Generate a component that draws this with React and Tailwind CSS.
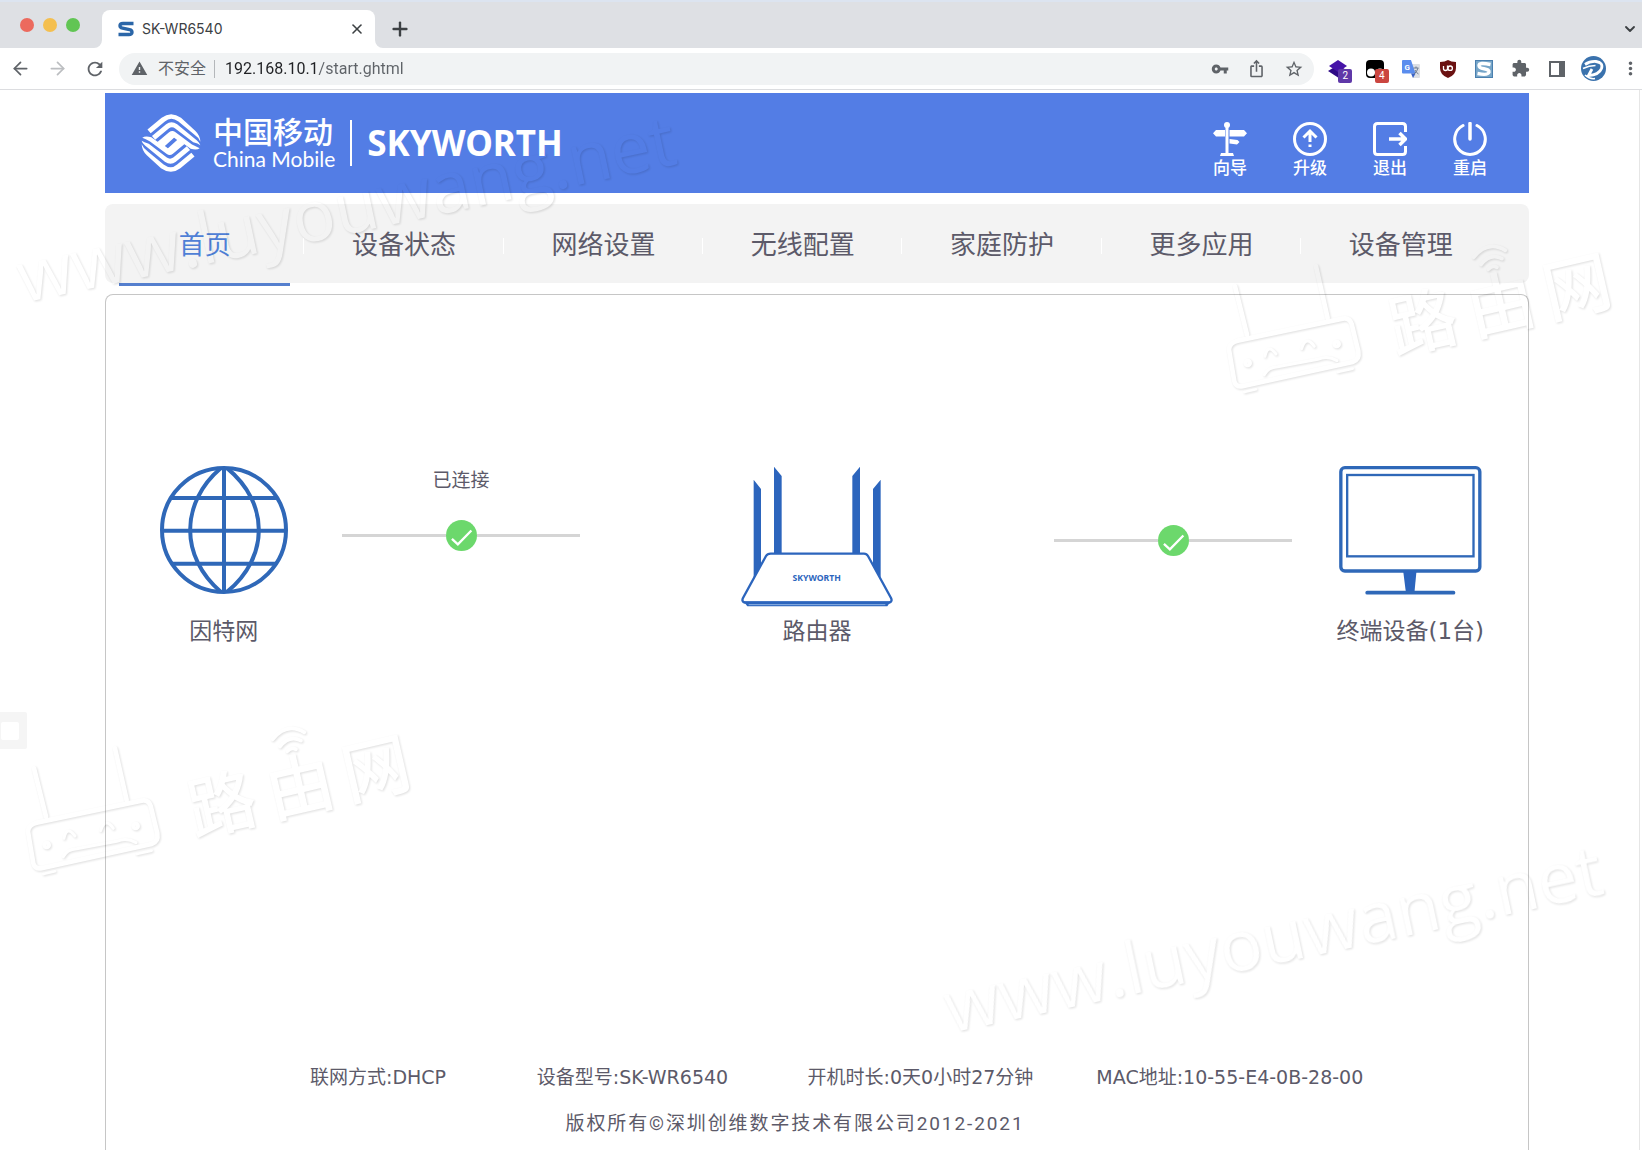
import React, { useState } from "react";
import { ArrowLeft, ArrowRight, ChevronDown, Plus, X } from "lucide-react";
import {
  MdExtension,
  MdMoreVert,
  MdOutlineIosShare,
  MdRefresh,
  MdStarOutline,
  MdVpnKey,
  MdWarning,
} from "react-icons/md";

const navItems = ["首页", "设备状态", "网络设置", "无线配置", "家庭防护", "更多应用", "设备管理"];

const deviceInfo = [
  "联网方式:DHCP",
  "设备型号:SK-WR6540",
  "开机时长:0天0小时27分钟",
  "MAC地址:10-55-E4-0B-28-00",
];

function TabStrip() {
  return (
    <div className="flex h-12 items-end border-t-2 border-[#dce4f0] bg-[#dee0e4] text-[#3c4043]">
      <div className="flex w-[102px] gap-[9px] self-start pt-4 pl-5">
        <span className="size-3.5 rounded-full bg-[#ec6a5e]"></span>
        <span className="size-3.5 rounded-full bg-[#f4bf4f]"></span>
        <span className="size-3.5 rounded-full bg-[#61c554]"></span>
      </div>
      <div className="relative flex h-[38px] w-[273px] items-center rounded-t-lg bg-white pr-2.5 pl-4">
        <svg className="absolute bottom-0 -left-2 size-2 fill-white" viewBox="0 0 8 8">
          <path d="M8 0v8H0a8 8 0 0 0 8-8z" />
        </svg>
        <svg className="absolute -right-2 bottom-0 size-2 fill-white" viewBox="0 0 8 8">
          <path d="M0 0v8h8a8 8 0 0 1-8-8z" />
        </svg>
        <svg className="size-4 fill-none stroke-[#2b66a8]" viewBox="0 0 16 16" strokeWidth="3.4">
          <path d="M15.500 2.500H5Q2 2.500 2 4.700 2 6.500 4.500 7.100L11.500 8.700Q14 9.300 14 11.200 14 13.500 11 13.500H.5" />
        </svg>
        <span className="ml-2 font-['Inter',sans-serif] text-sm">SK-WR6540</span>
        <button className="ml-auto" aria-label="close tab">
          <X className="size-4" strokeWidth={2.4} />
        </button>
      </div>
      <button className="ml-3.5 flex h-[38px] items-center" aria-label="new tab">
        <Plus className="size-[22px]" strokeWidth={2.6} />
      </button>
      <button className="mr-1 ml-auto flex h-[38px] items-center" aria-label="tab list">
        <ChevronDown className="size-4" strokeWidth={2.8} />
      </button>
    </div>
  );
}

function Extensions() {
  return (
    <div className="flex w-[292px] items-center justify-around">
      <button className="relative flex w-6 justify-center" aria-label="layers">
        <svg className="size-5" viewBox="0 0 20 20">
          <path d="M10 6l10 6-10 6.500L0 12z" fill="#2f0a86" />
          <path d="M10 1l9 6-9 6-9-6z" fill="#4614a8" />
        </svg>
        <span className="absolute top-2.5 left-3 w-3.5 rounded-xs bg-[#5f38a8] text-center text-[10px] leading-[14px] text-white">
          2
        </span>
      </button>
      <button className="relative flex w-6 justify-center" aria-label="scripts">
        <svg className="size-5" viewBox="0 0 20 20">
          <rect x="1" y="1" width="18" height="18" rx="4" fill="#000" />
          <circle cx="6" cy="13.500" r="4" fill="#fff" />
          <circle cx="15" cy="13.500" r="4" fill="#fff" />
        </svg>
        <span className="absolute top-2.5 left-3 w-3.5 rounded-xs bg-[#cb4640] text-center text-[10px] leading-[14px] text-white">
          4
        </span>
      </button>
      <button className="relative flex w-6 justify-center" aria-label="translate">
        <svg className="size-[18px]" viewBox="0 0 18 18">
          <path d="M7 4h10q1 0 1 1v12q0 1-1 1H11z" fill="#dcdfe4" />
          <path d="M1 0h8l4.500 13.500H1q-1 0-1-1V1q0-1 1-1z" fill="#5a8dee" />
          <path d="M9 13.500h4.500L11 18z" fill="#3a62c4" />
          <path d="M11.500 8h5M14 6.500V8M16 8q-1 4-4 6M13 10q1 2.500 3.500 4" fill="none" stroke="#6b7a90" />
          <text x="2.500" y="10" fontSize="8" fontWeight="700" fill="#fff">G</text>
        </svg>
      </button>
      <button className="relative flex w-6 justify-center" aria-label="blocker">
        <svg className="size-[18px]" viewBox="0 0 18 18">
          <path d="M9 0q3 2 8 2v6q0 7-8 10Q1 15 1 8V2q5 0 8-2z" fill="#6b1212" />
          <path d="M4.500 6v2.700q0 1.800 2 1.800t2-1.800V5.500M8.700 5.500v5" fill="none" stroke="#fff" strokeWidth="1.300" />
          <circle cx="11.200" cy="8.200" r="2.200" fill="none" stroke="#fff" strokeWidth="1.300" />
        </svg>
      </button>
      <button className="relative flex w-6 justify-center" aria-label="shortcuts">
        <svg className="size-[18px]" viewBox="0 0 18 18">
          <rect width="18" height="18" fill="#4a7fae" />
          <rect x="1" y="1" width="16" height="16" fill="#76a5c8" />
          <path d="M15.500 4.500Q4 2 4 5.500 4 8 9 8.700 14.500 9.500 14 12.300 13 15.500 2.500 13.500" fill="none" stroke="#fff" strokeWidth="3.400" />
        </svg>
      </button>
      <button className="flex w-6 justify-center text-[#5f6368]" aria-label="extensions">
        <MdExtension className="size-[19px]" />
      </button>
      <button className="flex w-6 justify-center" aria-label="side panel">
        <span className="h-4 w-4 border-2 border-r-[6px] border-[#5f6368]"></span>
      </button>
      <button className="flex w-6 justify-center" aria-label="profile">
        <svg className="size-[25px] shrink-0" viewBox="0 0 25 25">
          <circle cx="12.500" cy="12.500" r="12.500" fill="#3a72ad" />
          <path d="M4 8.500Q9 5 15 5.500 22.500 6.500 20.500 12.500 18 19 7.500 19.500L11 13" fill="none" stroke="#fff" strokeWidth="2.800" />
          <path d="M2 12.500Q8 9.500 14.500 9.500M4 19q5 4.500 10 3.500" fill="none" stroke="#fff" strokeWidth="1.600" />
        </svg>
      </button>
    </div>
  );
}

function Toolbar() {
  const [url, setUrl] = useState("192.168.10.1/start.ghtml");

  return (
    <div className="flex h-[42px] items-center border-b border-[#dcdde0] bg-white text-[#5f6368]">
      <div className="flex w-[119px] items-center gap-4 pl-2.5">
        <button aria-label="back">
          <ArrowLeft className="size-[21px]" />
        </button>
        <button className="text-[#bcbec1]" aria-label="forward">
          <ArrowRight className="size-[21px]" />
        </button>
        <button aria-label="reload">
          <MdRefresh className="size-[22px]" />
        </button>
      </div>
      <div className="flex h-8 flex-1 items-center rounded-full bg-[#f1f3f4] pr-2.5 pl-3">
        <MdWarning className="size-[17px]" />
        <label htmlFor="url" className="ml-2.5 text-base">不安全</label>
        <span className="mx-2 h-[18px] w-px bg-[#b4b7ba]"></span>
        <input
          id="url"
          value={url}
          onChange={(e) => setUrl(e.target.value)}
          className="mx-0.5 min-w-0 flex-1 bg-[linear-gradient(90deg,#202124_94px,#5f6368_94px)] bg-clip-text text-base text-transparent outline-none"
        />
        <div className="flex gap-[18px]">
          <button aria-label="passwords"><MdVpnKey className="size-[18px]" /></button>
          <button aria-label="share"><MdOutlineIosShare className="size-[19px]" /></button>
          <button aria-label="bookmark"><MdStarOutline className="size-5" /></button>
        </div>
      </div>
      <div className="w-1.5"></div>
      <Extensions />
      <button className="w-[30px] pl-2" aria-label="menu">
        <MdMoreVert className="size-[21px]" />
      </button>
    </div>
  );
}

function MobileLogo() {
  return (
    <svg className="h-[60px] w-[60px]" viewBox="12 12 186 184" fill="#fff">
      <g id="wave">
        <path d="M32 62L76 26Q105 4 136 26L180 66Q195 80 196 100Q190 86 176 77L128 37Q105 20 86 37L42 74z" />
        <path d="M46 82L90 46Q106 33 124 46L178 90Q193 101 196 111Q189 106 174 102L118 59Q108 52 98 59L56 94z" />
        <path d="M63 101L99 71Q109 63 119 71L170 109Q184 116 194 120Q186 127 166 122L138 102L106 132L94 122L124 95L113 86Q108 82 103 86L74 112z" />
      </g>
      <use href="#wave" transform="rotate(180 105 104)" />
    </svg>
  );
}

function Header() {
  const actions = [
    {
      label: "向导",
      icon: (
        <svg className="size-[34px]" viewBox="0 0 34 34" fill="#fff">
          <circle cx="14" cy="3" r="3" />
          <path d="M12.500 4h3v27h-3zM3 8h9v6.500H3L0 11.200zM16.500 8H31l3 3.200-3 3.300H16.500zM16.500 17l8 1 2 2-2.500 2.500-7.500-1zM8 31h12l1 3H7z" />
        </svg>
      ),
    },
    {
      label: "升级",
      icon: (
        <svg className="size-[34px]" viewBox="0 0 34 34" fill="none" stroke="#fff" strokeWidth="3">
          <circle cx="17" cy="17" r="15.500" />
          <path d="M17 9v11M17 22.500v2.500M10.500 15.500L17 9l6.500 6.500" />
        </svg>
      ),
    },
    {
      label: "退出",
      icon: (
        <svg className="size-[34px]" viewBox="0 0 34 34" fill="none" stroke="#fff" strokeWidth="3">
          <path d="M32.500 10V4.500Q32.500 1.500 29.500 1.500H4.500Q1.500 1.500 1.500 4.500V29.500Q1.500 32.500 4.500 32.500H29.500Q32.500 32.500 32.500 29.500V24" />
          <path d="M16 17H33M26.500 11l6 6-6 6" strokeWidth="3.500" />
        </svg>
      ),
    },
    {
      label: "重启",
      icon: (
        <svg className="size-[34px]" viewBox="0 0 34 34" fill="none" stroke="#fff" strokeWidth="3" strokeLinecap="round">
          <path d="M17 1.500V17" strokeWidth="3.500" />
          <path d="M10 3.500A15.300 15.300 0 1 0 24 3.500" />
        </svg>
      ),
    },
  ];

  return (
    <header className="flex h-[100px] bg-[#537de5] pr-[42px] pl-9 font-['Lato','Noto_Sans_CJK_SC',sans-serif] text-white">
      <div className="flex items-center">
        <MobileLogo />
        <div className="ml-3">
          <div className="text-[30px] leading-8 font-medium">中国移动</div>
          <div className="text-[21px] leading-6">China Mobile</div>
        </div>
        <div className="mx-[15px] h-[46px] w-0.5 bg-white"></div>
        <div className="font-['Noto_Sans',sans-serif] text-[35px] leading-10 font-bold">SKYWORTH</div>
      </div>
      <div className="ml-auto flex gap-[46px] pt-[29px]">
        {actions.map((item) => (
          <button key={item.label} className="flex flex-col items-center">
            {item.icon}
            <span className="text-[17px] leading-6 font-medium">{item.label}</span>
          </button>
        ))}
      </div>
    </header>
  );
}

function Nav() {
  const [active, setActive] = useState("首页");

  return (
    <nav className="mt-[11px] flex h-[79px] rounded-lg bg-[#f3f3f3] text-[26px] text-[#5c5a69]">
      {navItems.map((item) => (
        <a
          key={item}
          href="#"
          onClick={() => setActive(item)}
          className={
            "relative flex w-[14%] items-center justify-center pt-1 after:absolute after:right-0 after:h-4 after:w-px after:bg-white last:after:hidden " +
            (active === item ? "text-[#4f7fd6]" : "")
          }
        >
          {item}
          {active === item && (
            <span className="absolute inset-x-3.5 -bottom-[3px] h-[3px] bg-[#557fce]"></span>
          )}
        </a>
      ))}
    </nav>
  );
}

function GlobeIcon() {
  return (
    <svg className="h-[130px] w-[130px]" viewBox="177 76 390 390" fill="none" stroke="#2f68b8" strokeWidth="12">
      <circle cx="372" cy="271" r="186" />
      <path d="M372 82V460M186 273H560M216 175H530M216 372H530" />
      <path d="M362 86C240 190 240 352 362 456M382 86C508 190 508 352 382 456" />
    </svg>
  );
}

function RouterIcon() {
  return (
    <svg className="h-[143px] w-[160px]" viewBox="111 75 480 429" fill="#2c65bd">
      <path d="M161 119L183 147V380L161 412zM222 80L245 108V340H222zM480 80L457 108V340H480zM542 119L519 147V380L542 412z" />
      <path
        d="M212 341H492Q500 341 504 348L573 474Q578 484 568 488H134Q124 484 129 474L198 348Q202 341 212 341z"
        fill="#fff"
        stroke="#2c65bd"
        strokeWidth="7"
      />
      <path d="M130 484H572L562 499H142z" />
      <path d="M146 494H556" stroke="#8fb2e4" strokeWidth="3" />
      <text x="350" y="423" textAnchor="middle" fontSize="26" fontWeight="700" fontFamily="Noto Sans">
        SKYWORTH
      </text>
    </svg>
  );
}

function MonitorIcon() {
  return (
    <svg className="h-[130px] w-[147px]" viewBox="893 76 440 390" fill="none" stroke="#2f68b8">
      <rect x="904" y="84" width="417" height="310" rx="12" strokeWidth="10" />
      <rect x="923" y="106" width="379" height="244" strokeWidth="7" />
      <path d="M1091 394H1131L1125 456H1099z" fill="#2c65bd" stroke="none" />
      <path d="M983 459H1242" strokeWidth="11" strokeLinecap="round" />
    </svg>
  );
}

function Device({ label, children }) {
  return (
    <div className="flex flex-col items-center">
      <div className="h-36">{children}</div>
      <div className="mt-1 text-[23px] leading-9 whitespace-nowrap">{label}</div>
    </div>
  );
}

function LinkStatus() {
  return (
    <div className="flex items-center">
      <div className="h-[3px] flex-1 bg-[#d5d5d5]"></div>
      <svg className="size-[31px]" viewBox="0 0 94 94">
        <circle cx="47" cy="47" r="47" fill="#6cd86c" />
        <path d="M18 57L36 74L77 32" fill="none" stroke="#fff" strokeWidth="7" />
      </svg>
      <div className="h-[3px] flex-1 bg-[#d5d5d5]"></div>
    </div>
  );
}

function RouterMark() {
  return (
    <g>
      <g transform="translate(0 700) scale(0.3333)" fill="none" stroke="#000" strokeWidth="14" strokeLinecap="round">
        <path d="M110 368L425 302Q445 298 452 318L472 400Q476 425 455 432L125 505Q105 508 100 490L84 395Q84 375 110 368z" />
        <path d="M102 205L138 350M345 145L380 300" />
        <path d="M192 415Q200 375 225 408M302 392Q315 350 340 385M190 470Q200 448 230 446L350 424Q380 412 408 428" strokeWidth="9" />
        <path d="M130 522L165 514M410 462L455 452" strokeWidth="8" />
        <path d="M818 118Q860 66 913 97M840 140Q868 104 903 122M862 154Q875 140 888 148" strokeWidth="11" />
        <circle cx="140" cy="435" r="6" />
        <circle cx="407" cy="378" r="6" />
      </g>
      <g
        transform="translate(222 805) rotate(-13)"
        fontSize="68"
        fontWeight="500"
        fontFamily="Noto Sans CJK SC"
        textAnchor="middle"
      >
        <text x="0" y="24">路</text>
        <text x="80" y="24">由</text>
        <text x="158" y="24">网</text>
      </g>
    </g>
  );
}

// faint embossed marks lying over the whole page
function Watermark() {
  return (
    <svg className="pointer-events-none absolute inset-0 h-full w-full">
      <filter id="emboss">
        <feGaussianBlur in="SourceAlpha" stdDeviation="1" />
        <feOffset dx="1" dy="1" />
        <feComposite operator="out" in2="SourceAlpha" />
        <feComponentTransfer>
          <feFuncA type="linear" slope="0.13" />
        </feComponentTransfer>
      </filter>
      <g filter="url(#emboss)">
        <g fontFamily="Open Sans" fontSize="71">
          <text transform="translate(23 303) rotate(-12)">www.luyouwang.net</text>
          <text transform="translate(950 1033) rotate(-12)">www.luyouwang.net</text>
        </g>
        <RouterMark />
        <g transform="translate(1201 -482)">
          <RouterMark />
        </g>
      </g>
    </svg>
  );
}

function App() {
  return (
    <div className="relative flex min-h-screen flex-col overflow-hidden bg-white font-['Roboto','Noto_Sans_CJK_SC',sans-serif]">
      <TabStrip />
      <Toolbar />
      <div className="mr-0.5 flex flex-1 flex-col border-r border-[#e6e6e6] pt-[3px] pr-[110px] pl-[105px] font-['DejaVu_Sans','Noto_Sans_CJK_SC',sans-serif]">
        <Header />
        <Nav />
        <main className="mt-[11px] flex flex-1 flex-col rounded-t-lg border border-b-0 border-[#c6c6c6] pt-[170px] pb-2.5 text-[#5c5a69]">
          <div className="-mx-px grid grid-cols-12">
            <div className="col-span-2">
              <Device label="因特网"><GlobeIcon /></Device>
            </div>
            <div className="col-span-2">
              <div className="mb-6 text-center text-[19px] leading-[31px]">已连接</div>
              <LinkStatus />
            </div>
            <div className="col-span-2 col-start-6">
              <Device label="路由器"><RouterIcon /></Device>
            </div>
            <div className="col-span-2 col-start-9 pt-[60px]">
              <LinkStatus />
            </div>
            <div className="col-span-2">
              <Device label="终端设备(1台)"><MonitorIcon /></Device>
            </div>
          </div>
          <footer className="mt-auto">
            <div className="grid grid-cols-[227fr_271fr_289fr_432fr] pl-[204px] text-[19px] leading-8 whitespace-nowrap">
              {deviceInfo.map((info) => (
                <span key={info}>{info}</span>
              ))}
            </div>
            <p className="mt-[15px] pr-11 text-center font-['Roboto','Noto_Sans_CJK_SC',sans-serif] text-[19px] leading-8 tracking-widest">
              版权所有©深圳创维数字技术有限公司2012-2021
            </p>
          </footer>
        </main>
      </div>
      <button
        className="absolute top-[712px] left-0 flex h-[37px] w-[27px] items-center rounded-r-xs bg-[#f5f5f5] pl-px"
        aria-label="expand"
      >
        <span className="size-[18px] rounded-xs bg-white"></span>
      </button>
      <Watermark />
    </div>
  );
}

export default App;
